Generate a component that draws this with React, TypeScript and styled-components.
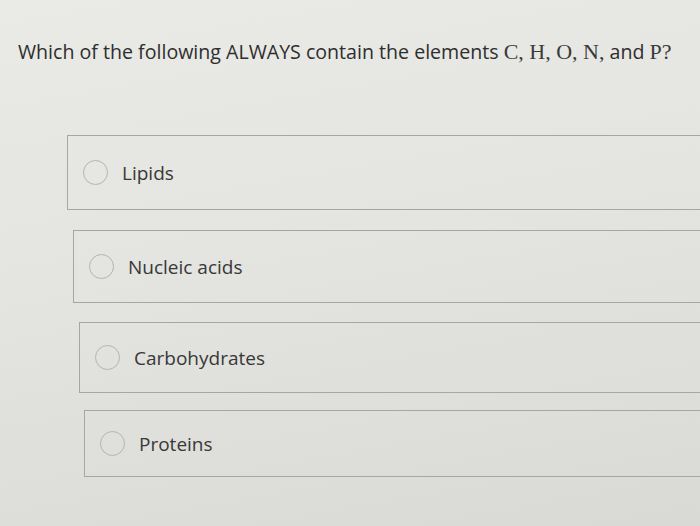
import React from 'react';
import styled, {createGlobalStyle} from 'styled-components';

const GlobalStyle = createGlobalStyle`
  html, body {
    margin: 0;
    padding: 0;
    overflow: hidden;
  }
  body {
    background: linear-gradient(170deg, #eaeae6 0%, #e3e3df 50%, #d9d9d5 100%);
    min-height: 526px;
    font-family: "Open Sans", "Liberation Sans", sans-serif;
  }
`

type OptionType = {
    label: string
    indent: number
    height: number
    gap: number
}

const options: Array<OptionType> = [
    {label: 'Lipids', indent: 67, height: 75, gap: 0},
    {label: 'Nucleic acids', indent: 73, height: 73, gap: 20},
    {label: 'Carbohydrates', indent: 79, height: 71, gap: 19},
    {label: 'Proteins', indent: 84, height: 67, gap: 17},
]

export default function App() {
    return (
        <Page>
            <GlobalStyle/>
            <Question>
                Which of the following ALWAYS contain the elements <El>C, H, O, N,</El> and <El>P?</El>
            </Question>
            <List>
                {options.map(o => (
                    <Option key={o.label} indent={o.indent} h={o.height} gap={o.gap}>
                        <Radio/>
                        <Label>{o.label}</Label>
                    </Option>
                ))}
            </List>
        </Page>
    );
}

const Page = styled.div`
  width: 700px;
  height: 526px;
  padding-top: 39px;
  box-sizing: border-box;
`
const Question = styled.div`
  padding-left: 18px;
  font-size: 19.6px;
  line-height: 26px;
  color: #2e2e2e;
  white-space: nowrap;
`
const El = styled.span`
  font-family: "Liberation Serif", "DejaVu Serif", serif;
  font-size: 22px;
  color: #3a3a3a;
`
const List = styled.div`
  display: flex;
  flex-direction: column;
  margin-top: 70px;
`
const Option = styled.div<{indent: number, h: number, gap: number}>`
  display: flex;
  align-items: center;
  gap: 14px;
  margin-left: ${p => p.indent}px;
  margin-top: ${p => p.gap}px;
  width: 700px;
  height: ${p => p.h}px;
  box-sizing: border-box;
  padding-left: 15px;
  border: 1.5px solid #a6a6a3;
  border-right: none;
`
const Radio = styled.span`
  width: 25px;
  height: 25px;
  border-radius: 50%;
  border: 1.5px solid #b4b4b0;
  box-sizing: border-box;
  flex-shrink: 0;
`
const Label = styled.span`
  font-size: 19px;
  color: #383838;
`
